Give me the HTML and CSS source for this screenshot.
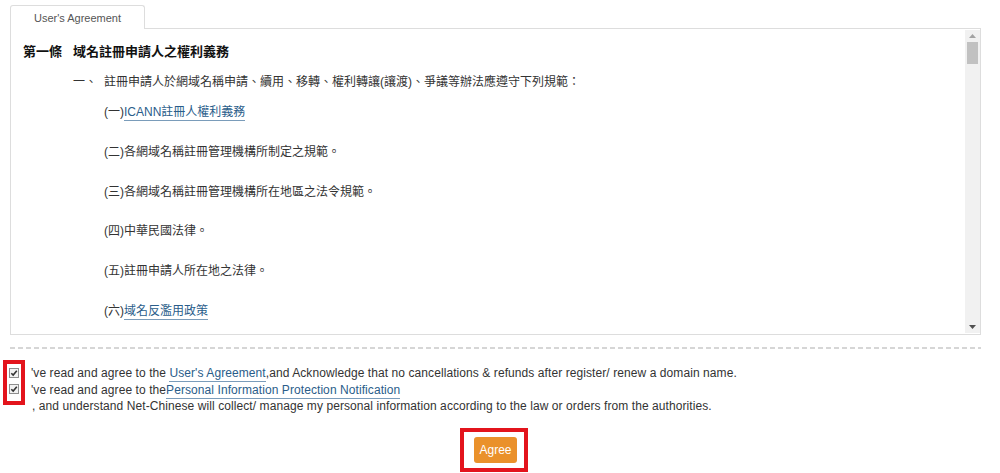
FILE: index.html
```html
<!DOCTYPE html>
<html lang="zh-Hant">
<head>
<meta charset="utf-8">
<title>User's Agreement</title>
<link rel="stylesheet" href="styles.css">
</head>
<body>
<div class="page">
  <div class="tabs">
    <div class="tab">User's Agreement</div>
  </div>
  <div class="panel">
    <div class="doc">
      <h3 class="article"><span class="art-no">第一條</span><span>域名註冊申請人之權利義務</span></h3>
      <p class="section"><span class="sec-no">一、</span>註冊申請人於網域名稱申請、續用、移轉、權利轉讓(讓渡)、爭議等辦法應遵守下列規範：</p>
      <p class="item">(一)<a class="link" href="#">ICANN註冊人權利義務</a></p>
      <p class="item">(二)各網域名稱註冊管理機構所制定之規範。</p>
      <p class="item">(三)各網域名稱註冊管理機構所在地區之法令規範。</p>
      <p class="item">(四)中華民國法律。</p>
      <p class="item">(五)註冊申請人所在地之法律。</p>
      <p class="item">(六)<a class="link" href="#">域名反濫用政策</a></p>
    </div>
    <div class="scrollbar">
      <div class="sb-btn"><svg width="7" height="4" viewBox="0 0 7 4"><path d="M0 4 L3.5 0 L7 4 Z" fill="#a3a3a3"/></svg></div>
      <div class="sb-thumb"></div>
      <div class="sb-track"></div>
      <div class="sb-btn"><svg width="7" height="4" viewBox="0 0 7 4"><path d="M0 0 L7 0 L3.5 4 Z" fill="#505050"/></svg></div>
    </div>
  </div>
  <div class="divider"></div>
  <div class="consent">
    <div class="mark-box">
      <span class="cb"><svg width="10" height="10" viewBox="0 0 10 10"><rect x="0.5" y="0.5" width="9" height="9" fill="#f2f2f2" stroke="#8e8e8e"/><path d="M2.3 5.2 L4.2 7.1 L7.8 2.8" fill="none" stroke="#333" stroke-width="1.6"/></svg></span>
      <span class="cb"><svg width="10" height="10" viewBox="0 0 10 10"><rect x="0.5" y="0.5" width="9" height="9" fill="#f2f2f2" stroke="#8e8e8e"/><path d="M2.3 5.2 L4.2 7.1 L7.8 2.8" fill="none" stroke="#333" stroke-width="1.6"/></svg></span>
    </div>
    <div class="lines">
      <div class="line">'ve read and agree to the <a class="link" href="#">User's Agreement</a>,and Acknowledge that no cancellations &amp; refunds after register/ renew a domain name.</div>
      <div class="line">'ve read and agree to the<a class="link" href="#">Personal Information Protection Notification</a></div>
      <div class="line">, and understand Net-Chinese will collect/ manage my personal information according to the law or orders from the authorities.</div>
    </div>
  </div>
  <div class="actions">
    <div class="btn-box"><button class="btn" type="button">Agree</button></div>
  </div>
</div>
</body>
</html>
```

FILE: styles.css
```css
html, body {
  margin: 0;
  padding: 0;
  background: #fff;
}
body {
  font-family: "Liberation Sans", Arial, "Noto Sans CJK TC", sans-serif;
  font-size: 12px;
  color: #333;
}
.page {
  width: 971px;
  padding: 5px 0 0 10px;
}
.tabs {
  display: flex;
  height: 24px;
  margin-bottom: -1px;
}
.tab {
  width: 133px;
  height: 23px;
  border: 1px solid #ddd;
  border-bottom: none;
  border-radius: 3px 3px 0 0;
  background: #fff;
  color: #555;
  font-size: 11px;
  line-height: 24px;
  text-align: center;
  position: relative;
  z-index: 1;
}
.panel {
  display: flex;
  height: 305px;
  border: 1px solid #ddd;
}
.doc {
  flex: 1;
  padding: 13px 12px 0 12px;
  overflow: hidden;
}
.article {
  margin: 0;
  font-size: 13px;
  font-weight: bold;
  color: #111;
  line-height: 20px;
  display: flex;
}
.art-no {
  width: 50px;
}
.section {
  margin: 10px 0 0 0;
  padding-left: 50px;
  line-height: 20px;
  color: #333;
}
.sec-no {
  display: inline-block;
  width: 31px;
}
.item {
  margin: 10px 0 0 0;
  padding-left: 81px;
  line-height: 20px;
}
.item + .item {
  margin-top: 19.8px;
}
.link {
  color: #2a5d8a;
  text-decoration: none;
  border-bottom: 1px solid #7a9cba;
  padding-bottom: 1px;
}
.scrollbar {
  width: 15px;
  margin: 1px 0;
  background: #f1f1f1;
  display: flex;
  flex-direction: column;
}
.sb-btn {
  height: 12px;
  display: flex;
  align-items: center;
  justify-content: center;
}
.sb-thumb {
  height: 22px;
  margin: 0 2px;
  background: #c1c1c1;
}
.sb-track {
  flex: 1;
}
.divider {
  height: 2px;
  margin-top: 12px;
  background: repeating-linear-gradient(90deg, #d6d6d6 0 5px, transparent 5px 8px);
}
.consent {
  display: flex;
  margin-top: 11px;
  margin-left: -7px;
}
.mark-box {
  width: 14px;
  height: 33px;
  border: 4px solid #e3141c;
  display: flex;
  flex-direction: column;
  align-items: center;
  padding-top: 4px;
  gap: 6px;
}
.cb {
  display: block;
  width: 10px;
  height: 10px;
}
.cb svg {
  display: block;
}
.lines {
  margin-left: 6px;
  margin-top: 5px;
  color: #333;
}
.line {
  line-height: 16.5px;
  white-space: nowrap;
  letter-spacing: 0.08px;
}
.line:last-child {
  padding-left: 1px;
}
.actions {
  display: flex;
  justify-content: center;
  margin-top: 13px;
}
.btn-box {
  border: 4px solid #e3141c;
  padding: 5px 7px 5px 10px;
  margin-left: -3px;
}
.btn {
  width: 43px;
  height: 26px;
  border: none;
  border-radius: 3px;
  background: #ea912b;
  color: #fff;
  font-family: "Liberation Sans", Arial, sans-serif;
  font-size: 12px;
  padding: 0;
  display: block;
}
```
